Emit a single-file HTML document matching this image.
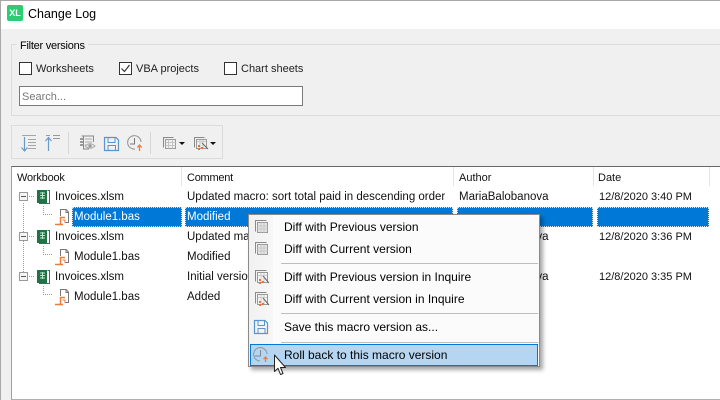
<!DOCTYPE html>
<html><head><meta charset="utf-8"><style>
html,body{margin:0;padding:0}
body{width:720px;height:400px;position:relative;overflow:hidden;background:#f0f0f0;font-family:"Liberation Sans",sans-serif;font-size:12px;color:#111}
.a{position:absolute}
.t{position:absolute;white-space:nowrap;line-height:14px;height:14px}
.r{font-size:11.5px;margin-top:1px}
.d{font-size:11px;margin-top:1px}
.l{font-size:11px;color:#222;margin-top:1px}
.h{font-size:11px;color:#111;margin-top:1px}
.cb{position:absolute;width:11px;height:11px;border:1px solid #333;background:#fff}
.sel{position:absolute;top:207px;height:18px;background:#0078d7;border:1px dotted #cfe4f7}
.m{position:absolute;left:284px;white-space:nowrap;line-height:14px;color:#000}
.sep{position:absolute;left:281px;width:257px;height:1px;background:#bdbdbd}
svg{position:absolute;overflow:visible}
</style></head><body>
<div class="a" style="left:0;top:0;width:720px;height:29px;background:#fff"></div>
<div class="a" style="left:0;top:0;width:720px;height:1px;background:#a8a8a8"></div>
<div class="a" style="left:0;top:0;width:1px;height:400px;background:#a8a8a8"></div>
<div class="a" style="left:7px;top:5px;width:16px;height:16px;background:#2ecc71;border-radius:2px;color:#fff;font-weight:bold;font-size:9px;line-height:16px;text-align:center">XL</div>
<div class="t" style="left:28px;top:7px;color:#000;font-size:12.500px">Change Log</div>

<div class="a" style="left:11px;top:44px;width:709px;height:72px;border:1px solid #dcdcdc;border-right:0;box-sizing:border-box"></div>
<div class="t" style="left:17px;top:39px;background:#f0f0f0;padding:0 3px;color:#000;font-size:11px;letter-spacing:-.25px">Filter versions</div>
<div class="cb" style="left:19px;top:62px"></div><div class="t l" style="left:36px;top:61px">Worksheets</div>
<div class="cb" style="left:119px;top:62px"></div>
<svg style="left:119px;top:62px" width="13" height="13"><path d="M2.500 6.500L5.500 9.500L10.500 3" fill="none" stroke="#333" stroke-width="1.200"/></svg>
<div class="t l" style="left:136px;top:61px">VBA projects</div>
<div class="cb" style="left:224px;top:62px"></div><div class="t l" style="left:241px;top:61px">Chart sheets</div>
<div class="a" style="left:19px;top:86px;width:282px;height:18px;border:1px solid #7a7a7a;background:#fff"></div>
<div class="t" style="left:22px;top:90px;color:#777;font-size:11px">Search...</div>

<div class="a" style="left:11px;top:125px;width:212px;height:34px;border:1px solid #dcdcdc;box-sizing:border-box"></div>
<div class="a" style="left:68px;top:132px;width:1px;height:22px;background:#d6d6d6"></div>
<div class="a" style="left:150px;top:132px;width:1px;height:22px;background:#d6d6d6"></div>
<svg style="left:0;top:0" width="230" height="165" fill="none">
<path d="M22 135.500H36M28 139.500H36M28 142.500H36M28 145.500H36M28 148.500H36" stroke="#a6a6a6"/>
<path d="M24.500 137V150.500M21.500 147.500L24.500 151L27.500 147.500" stroke="#6b9ac9" stroke-width="1.200"/>
<path d="M46 135.500H50M53 135.500H60M53 138.500H60" stroke="#999"/>
<path d="M48.500 151V137.500M45.500 141L48.500 137.500L51.500 141" stroke="#6b9ac9" stroke-width="1.200"/>
<path d="M81.500 136H93.500V142M89 149H83.500V136" stroke="#888"/>
<path d="M85 139H92M85 142H92M85 145H88" stroke="#aaa"/>
<path d="M80 139H83M80 142H83M80 145H83" stroke="#666" stroke-width="1.300"/>
<path d="M85 146Q90 141.500 95 146Q90 150.500 85 146Z" stroke="#aaa" fill="#e4e4e4"/>
<circle cx="90" cy="146" r="1.600" fill="#999"/>
<path d="M104.500 137.500H116L118.500 140V150.500H104.500Z" stroke="#5b93cb" stroke-width="1.200"/>
<path d="M108 138V142.500H115V138M108 150V145.500H115.500V150" stroke="#5b93cb"/>
<path d="M135 149A6.700 6.700 0 1 1 141 142" stroke="#999" stroke-width="1.100"/>
<path d="M134.500 138V144H130" stroke="#777"/>
<path d="M139.500 151V145M137.300 147.500L139.500 145L141.700 147.500" stroke="#ef7b3f" stroke-width="1.300"/>
<path d="M163.500 147.500V137.500H173.500" stroke="#8a8a8a"/>
<rect x="165.500" y="139.500" width="10" height="9" stroke="#9a9a9a"/>
<path d="M165.500 142.500H175.500M165.500 145.500H175.500M168.500 139.500V148.500M172.500 139.500V148.500" stroke="#c4c4c4"/>
<path d="M179 142H185L182 145Z" fill="#111"/>
<path d="M194.500 147.500V137.500H204.500" stroke="#8a8a8a"/>
<rect x="196.500" y="139.500" width="10" height="9" stroke="#9a9a9a"/>
<path d="M197 141.500H206M200 140V148M203 140V148" stroke="#c9c9c9"/>
<rect x="198" y="145" width="2" height="2" fill="#e9743a"/><rect x="201" y="147" width="2" height="2" fill="#e9743a"/><rect x="198" y="148" width="2" height="2" fill="#e9743a"/>
<path d="M202 143L208 149" stroke="#666"/>
<path d="M210 142H216L213 145Z" fill="#111"/>
</svg>

<div class="a" style="left:11px;top:166px;width:709px;height:234px;background:#fff;border:1px solid #a0a0a0;border-top:1px solid #696969;border-right:0;border-bottom:1px solid #b0b0b0;box-sizing:border-box"></div>
<div class="a" style="left:181px;top:167px;width:1px;height:19px;background:#e5e5e5"></div>
<div class="a" style="left:453px;top:167px;width:1px;height:19px;background:#e5e5e5"></div>
<div class="a" style="left:593px;top:167px;width:1px;height:19px;background:#e5e5e5"></div>
<div class="a" style="left:709px;top:167px;width:1px;height:19px;background:#e5e5e5"></div>
<div class="t h" style="left:17px;top:170px;letter-spacing:-.2px">Workbook</div>
<div class="t h" style="left:187px;top:170px;letter-spacing:-.25px">Comment</div>
<div class="t h" style="left:459px;top:170px">Author</div>
<div class="t h" style="left:598px;top:170px">Date</div>

<div class="sel" style="left:72px;width:108px"></div>
<div class="sel" style="left:185px;width:266px"></div>
<div class="sel" style="left:457px;width:134px"></div>
<div class="sel" style="left:597px;width:110px"></div>

<svg style="left:0;top:0" width="110" height="310" fill="none">
<path d="M23.500 203V272M43.500 206V214.500H53M43.500 246V254.500H53M43.500 286V294.500H53M29 196.500H35M29 236.500H35M29 276.500H35" stroke="#999" stroke-dasharray="1 1"/>
<rect x="19.500" y="192.500" width="8" height="8" fill="#f4f4f4" stroke="#9a9a9a"/><path d="M21 196.500H26" stroke="#555"/>
<rect x="19.500" y="232.500" width="8" height="8" fill="#f4f4f4" stroke="#9a9a9a"/><path d="M21 236.500H26" stroke="#555"/>
<rect x="19.500" y="272.500" width="8" height="8" fill="#f4f4f4" stroke="#9a9a9a"/><path d="M21 276.500H26" stroke="#555"/>
<rect x="37" y="190" width="10" height="13" fill="#217346"/><path d="M47.500 190.500H49.500V203.500H39" stroke="#2c7a55"/><path d="M40 193H45M40 195.500H45M40 198H45M42.500 192V199" stroke="#bfe4cc"/>
<rect x="37" y="230" width="10" height="13" fill="#217346"/><path d="M47.500 230.500H49.500V243.500H39" stroke="#2c7a55"/><path d="M40 233H45M40 235.500H45M40 238H45M42.500 232V239" stroke="#bfe4cc"/>
<rect x="37" y="270" width="10" height="13" fill="#217346"/><path d="M47.500 270.500H49.500V283.500H39" stroke="#2c7a55"/><path d="M40 273H45M40 275.500H45M40 278H45M42.500 272V279" stroke="#bfe4cc"/>
<g><path d="M60.500 216V209.500H66L68.500 212V222.500H65" stroke="#777"/><path d="M66 209.500V212.500H68.500" stroke="#777"/><path d="M65 217.500H60.500V224M55 224.500H63" stroke="#ef7b3f" stroke-width="1.500"/><path d="M62.500 220H65V223" stroke="#ef7b3f"/></g>
<g><path d="M60.500 256V249.500H66L68.500 252V262.500H65" stroke="#777"/><path d="M66 249.500V252.500H68.500" stroke="#777"/><path d="M65 257.500H60.500V264M55 264.500H63" stroke="#ef7b3f" stroke-width="1.500"/><path d="M62.500 260H65V263" stroke="#ef7b3f"/></g>
<g><path d="M60.500 296V289.500H66L68.500 292V302.500H65" stroke="#777"/><path d="M66 289.500V292.500H68.500" stroke="#777"/><path d="M65 297.500H60.500V304M55 304.500H63" stroke="#ef7b3f" stroke-width="1.500"/><path d="M62.500 300H65V303" stroke="#ef7b3f"/></g>
</svg>

<div class="t r" style="left:55px;top:189px">Invoices.xlsm</div>
<div class="t r" style="left:74px;top:209px;color:#fff">Module1.bas</div>
<div class="t r" style="left:55px;top:229px">Invoices.xlsm</div>
<div class="t r" style="left:74px;top:249px">Module1.bas</div>
<div class="t r" style="left:55px;top:269px">Invoices.xlsm</div>
<div class="t r" style="left:74px;top:289px">Module1.bas</div>
<div class="t r" style="left:187px;top:189px">Updated macro: sort total paid in descending order</div>
<div class="t r" style="left:187px;top:209px;color:#fff">Modified</div>
<div class="t r" style="left:187px;top:229px">Updated macro</div>
<div class="t r" style="left:187px;top:249px">Modified</div>
<div class="t r" style="left:187px;top:269px">Initial version</div>
<div class="t r" style="left:187px;top:289px">Added</div>
<div class="t r" style="left:459px;top:189px">MariaBalobanova</div>
<div class="t r" style="left:459px;top:229px">MariaBalobanova</div>
<div class="t r" style="left:459px;top:269px">MariaBalobanova</div>
<div class="t d" style="left:599px;top:189px">12/8/2020 3:40 PM</div>
<div class="t d" style="left:599px;top:229px">12/8/2020 3:36 PM</div>
<div class="t d" style="left:599px;top:269px">12/8/2020 3:35 PM</div>

<div class="a" style="left:248px;top:214px;width:292px;height:153px;box-sizing:border-box;background:#fbfbfb;border:1px solid #8a8a8a;box-shadow:3px 3px 4px rgba(0,0,0,.35)"></div>
<div class="a" style="left:249px;top:215px;width:24px;height:151px;background:linear-gradient(90deg,#f1f1f1,#f7f7f7)"></div>
<div class="sep" style="top:263px"></div>
<div class="sep" style="top:313px"></div>
<div class="sep" style="top:342px"></div>
<div class="a" style="left:250px;top:344px;width:288px;height:22px;box-sizing:border-box;background:#b5d6f2;border:1px solid #0078d7"></div>
<div class="m" style="top:220px">Diff with Previous version</div>
<div class="m" style="top:242px">Diff with Current version</div>
<div class="m" style="top:270px">Diff with Previous version in Inquire</div>
<div class="m" style="top:292px">Diff with Current version in Inquire</div>
<div class="m" style="top:320px">Save this macro version as...</div>
<div class="m" style="top:348px">Roll back to this macro version</div>
<svg style="left:0;top:0" width="300" height="385" fill="none">
<path d="M255.500 231.500V220.500H266.500" stroke="#8a8a8a"/><rect x="257.500" y="222.500" width="10" height="10" fill="#e4e4e4" stroke="#999"/><path d="M257.500 226H267.500M257.500 229H267.500M261 222.500V232.500M264 222.500V232.500" stroke="#c8c8c8"/>
<path d="M255.500 253.500V242.500H266.500" stroke="#8a8a8a"/><rect x="257.500" y="244.500" width="10" height="10" fill="#e4e4e4" stroke="#999"/><path d="M257.500 248H267.500M257.500 251H267.500M261 244.500V254.500M264 244.500V254.500" stroke="#c8c8c8"/>
<path d="M255.500 281.500V270.500H266.500" stroke="#8a8a8a"/><rect x="257.500" y="272.500" width="10" height="10" stroke="#999"/><path d="M258 275.500H267M261 273V282M264 273V282" stroke="#ccc"/><rect x="259" y="279" width="2" height="2" fill="#e9743a"/><rect x="262" y="281" width="2" height="2" fill="#e9743a"/><rect x="259" y="282" width="2" height="2" fill="#e9743a"/><path d="M263 276L269 283" stroke="#666"/>
<path d="M255.500 303.500V292.500H266.500" stroke="#8a8a8a"/><rect x="257.500" y="294.500" width="10" height="10" stroke="#999"/><path d="M258 297.500H267M261 295V304M264 295V304" stroke="#ccc"/><rect x="259" y="301" width="2" height="2" fill="#e9743a"/><rect x="262" y="303" width="2" height="2" fill="#e9743a"/><rect x="259" y="304" width="2" height="2" fill="#e9743a"/><path d="M263 298L269 305" stroke="#666"/>
<path d="M254.500 320.500H265L267.500 323V333.500H254.500Z" stroke="#5b93cb" stroke-width="1.200"/><path d="M258 321V325.500H264.500V321M258 333V328.500H265V333" stroke="#5b93cb"/>
<path d="M260 361A6.700 6.700 0 1 1 267 354" stroke="#8f9aa5" stroke-width="1.100"/><path d="M260.500 350V356H255" stroke="#7d8791"/><path d="M265.500 362V357M263.500 359L265.500 357L267.500 359" stroke="#ef7b3f" stroke-width="1.300"/>
<path d="M274.500 355V371.500L278 368.300L280.500 374.500L283 373.500L280.500 367.500H285.500Z" fill="#fff" stroke="#222" stroke-linejoin="round"/>
</svg>
</body></html>
